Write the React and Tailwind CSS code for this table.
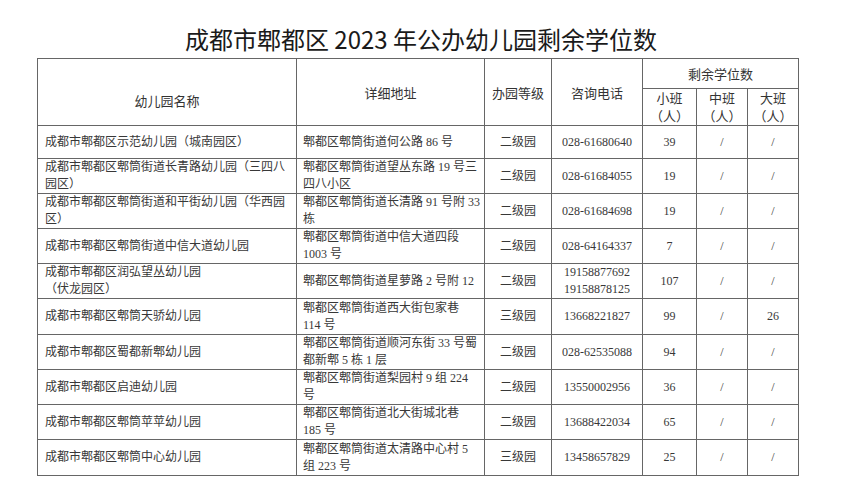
import React from "react";

const rows = [
  { h: 33, name: ["成都市郫都区示范幼儿园（城南园区）"], addr: ["郫都区郫筒街道何公路 86 号"], level: "二级园", tel: ["028-61680640"], s: "39", m: "/", l: "/" },
  { h: 35, name: ["成都市郫都区郫筒街道长青路幼儿园（三四八", "园区）"], addr: ["郫都区郫筒街道望丛东路 19 号三", "四八小区"], level: "二级园", tel: ["028-61684055"], s: "19", m: "/", l: "/" },
  { h: 35, name: ["成都市郫都区郫筒街道和平街幼儿园（华西园", "区）"], addr: ["郫都区郫筒街道长清路 91 号附 33", "栋"], level: "二级园", tel: ["028-61684698"], s: "19", m: "/", l: "/" },
  { h: 35, name: ["成都市郫都区郫筒街道中信大道幼儿园"], addr: ["郫都区郫筒街道中信大道四段", "1003 号"], level: "二级园", tel: ["028-64164337"], s: "7", m: "/", l: "/" },
  { h: 35, name: ["成都市郫都区润弘望丛幼儿园", "（伏龙园区）"], addr: ["郫都区郫筒街道星萝路 2 号附 12"], level: "二级园", tel: ["19158877692", "19158878125"], s: "107", m: "/", l: "/" },
  { h: 36, name: ["成都市郫都区郫筒天骄幼儿园"], addr: ["郫都区郫筒街道西大街包家巷", "114 号"], level: "三级园", tel: ["13668221827"], s: "99", m: "/", l: "26" },
  { h: 35, name: ["成都市郫都区蜀都新郫幼儿园"], addr: ["郫都区郫筒街道顺河东街 33 号蜀", "都新郫 5 栋 1 层"], level: "二级园", tel: ["028-62535088"], s: "94", m: "/", l: "/" },
  { h: 35, name: ["成都市郫都区启迪幼儿园"], addr: ["郫都区郫筒街道梨园村 9 组 224", "号"], level: "二级园", tel: ["13550002956"], s: "36", m: "/", l: "/" },
  { h: 34, name: ["成都市郫都区郫筒苹苹幼儿园"], addr: ["郫都区郫筒街道北大街城北巷", "185 号"], level: "二级园", tel: ["13688422034"], s: "65", m: "/", l: "/" },
  { h: 36, name: ["成都市郫都区郫筒中心幼儿园"], addr: ["郫都区郫筒街道太清路中心村 5", "组 223 号"], level: "三级园", tel: ["13458657829"], s: "25", m: "/", l: "/" },
];

const Lines = ({ items }) =>
  items.map((t, i) => (
    <span key={i} className="block">
      {t}
    </span>
  ));

const App = () => {
  return (
    <div className="w-[842px] h-[494px] bg-white overflow-hidden">
      {/* title */}
      <div className="h-[58px] pt-[27px] flex justify-center">
        <h1
          className="text-[24px] leading-[24px] font-normal text-[#1a1a1a] whitespace-nowrap"
          style={{ fontFamily: '"Noto Sans CJK SC", sans-serif' }}
        >
          成都市郫都区 2023 年公办幼儿园剩余学位数
        </h1>
      </div>

      <table
        className="ml-[37px] w-[761px] table-fixed border-collapse text-[12px] leading-[17px] text-[#383838]"
        style={{ fontFamily: '"Liberation Serif", "Noto Sans CJK SC", serif' }}
      >
        <colgroup>
          <col className="w-[259px]" />
          <col className="w-[188px]" />
          <col className="w-[67px]" />
          <col className="w-[91px]" />
          <col className="w-[54px]" />
          <col className="w-[51px]" />
          <col className="w-[51px]" />
        </colgroup>
        <thead
          className="text-[13px] text-[#333]"
          style={{ fontFamily: '"Noto Sans CJK SC", sans-serif' }}
        >
          <tr className="h-[30px]">
            <th rowSpan={2} className="border border-[#666] font-normal pt-[16px]">
              幼儿园名称
            </th>
            <th rowSpan={2} className="border border-[#666] font-normal">
              详细地址
            </th>
            <th rowSpan={2} className="border border-[#666] font-normal">
              办园等级
            </th>
            <th rowSpan={2} className="border border-[#666] font-normal">
              咨询电话
            </th>
            <th colSpan={3} className="border border-[#666] font-normal">
              剩余学位数
            </th>
          </tr>
          <tr className="h-[36px] leading-[18px]">
            <th className="border border-[#666] font-normal">
              <span className="block">小班</span>
              <span className="block">（人）</span>
            </th>
            <th className="border border-[#666] font-normal">
              <span className="block">中班</span>
              <span className="block">（人）</span>
            </th>
            <th className="border border-[#666] font-normal">
              <span className="block">大班</span>
              <span className="block">（人）</span>
            </th>
          </tr>
        </thead>
        <tbody>
          {rows.map((r, i) => (
            <tr key={i} style={{ height: r.h }}>
              <td className="border border-[#666] px-[7px] whitespace-nowrap">
                <Lines items={r.name} />
              </td>
              <td className="border border-[#666] px-[6px] whitespace-nowrap">
                <Lines items={r.addr} />
              </td>
              <td className="border border-[#666] text-center">{r.level}</td>
              <td className="border border-[#666] text-center">
                <Lines items={r.tel} />
              </td>
              <td className="border border-[#666] text-center">{r.s}</td>
              <td className="border border-[#666] text-center">{r.m}</td>
              <td className="border border-[#666] text-center">{r.l}</td>
            </tr>
          ))}
        </tbody>
      </table>
    </div>
  );
};

export default App;
